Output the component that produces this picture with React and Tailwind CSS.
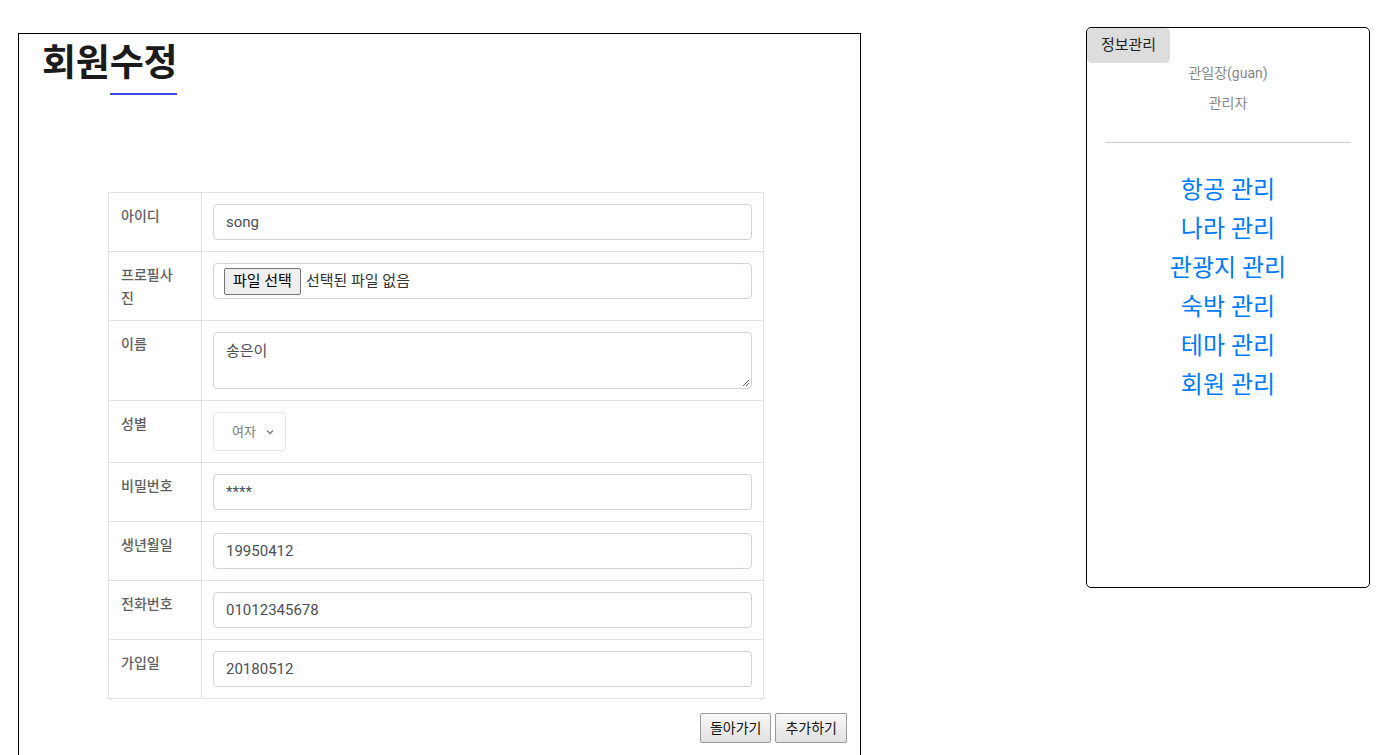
import React from "react";

const font = { fontFamily: 'Roboto, "Noto Sans CJK KR", sans-serif' };

function Row({ label, children, h }) {
  return (
    <tr className="border-b border-[#dee2e6]">
      <th className="w-[93px] border-r border-[#dee2e6] pl-3 pr-0 pt-[12px] pb-[10px] align-top text-left text-[14px] leading-[23px] font-medium text-[#5f5f5f]">
        <div className="w-[60px] break-all">{label}</div>
      </th>
      <td className="px-[11px] py-[11px] align-top" style={h ? { height: h } : undefined}>
        {children}
      </td>
    </tr>
  );
}

function Input({ value }) {
  return (
    <div className="h-[36px] w-full rounded-[4px] border border-[#ced4da] px-3 flex items-center text-[15px] text-[#495057]">
      {value}
    </div>
  );
}

function Btn({ children }) {
  return (
    <button className="h-[30px] px-[9px] border border-[#9a9a9a] rounded-[2px] bg-gradient-to-b from-[#f8f8f8] to-[#e1e1e1] text-[14px] text-[#111] leading-none">
      {children}
    </button>
  );
}

export default function App() {
  return (
    <div className="flex items-start bg-white min-h-[755px] overflow-hidden" style={font}>
      <div className="ml-[18px] mt-[33px] w-[843px] h-[760px] border border-black shrink-0">
        <div className="pl-[23px] pt-[2px]">
          <h1 className="text-[37px] font-bold leading-[48px] text-[#1b1b1b] tracking-[-0.2px]" style={{ fontFamily: '"Noto Sans CJK KR", sans-serif' }}>
            회원수정
          </h1>
          <div className="ml-[68px] mt-[9px] w-[67px] h-[2px] bg-[#3b4ce0]" />
        </div>
        <div className="ml-[89px] mt-[97px] w-[656px]">
          <table className="w-full border-collapse border border-[#dee2e6]">
            <tbody>
              <Row label="아이디">
                <Input value="song" />
              </Row>
              <Row label="프로필사진">
                <div className="h-[36px] w-full rounded-[4px] border border-[#ced4da] pl-[10px] flex items-center text-[15px] text-[#333]">
                  <span className="h-[27px] px-[8px] border border-[#767676] rounded-[2px] bg-[#efefef] flex items-center text-[15px] text-black">파일 선택</span>
                  <span className="ml-[5px]">선택된 파일 없음</span>
                </div>
              </Row>
              <Row label="이름">
                <div className="relative h-[57px] w-full rounded-[4px] border border-[#ced4da] px-3 pt-[7px] text-[15px] text-[#495057]">
                  송은이
                  <svg className="absolute right-[1px] bottom-[1px]" width="9" height="9" viewBox="0 0 9 9">
                    <path d="M8 2 L2 8 M8 5 L5 8" stroke="#666" strokeWidth="1" />
                  </svg>
                </div>
              </Row>
              <Row label="성별">
                <div className="h-[39px] w-[73px] rounded-[4px] border border-[#e4e4e4] flex items-center pl-[18px] text-[13px] text-[#777]">
                  여자
                  <svg className="ml-[10px]" width="8" height="6" viewBox="0 0 8 6">
                    <path d="M1 1.5 L4 4.5 L7 1.5" stroke="#888" strokeWidth="1.6" fill="none" />
                  </svg>
                </div>
              </Row>
              <Row label="비밀번호">
                <Input value="****" />
              </Row>
              <Row label="생년월일">
                <Input value="19950412" />
              </Row>
              <Row label="전화번호">
                <Input value="01012345678" />
              </Row>
              <Row label="가입일">
                <Input value="20180512" />
              </Row>
            </tbody>
          </table>
        </div>
        <div className="flex justify-end gap-[4px] mr-[13px] mt-[14px]">
          <Btn>돌아가기</Btn>
          <Btn>추가하기</Btn>
        </div>
      </div>
      <div className="ml-[225px] mt-[27px] w-[284px] h-[561px] border border-black rounded-[5px] shrink-0">
        <div className="w-[83px] h-[35px] bg-[#dddddd] rounded-[5px] flex items-center justify-center text-[15px] text-[#222]">
          정보관리
        </div>
        <div className="-mt-[5px] text-center text-[14px] leading-[30px] text-[#888]">
          <div>관일장(guan)</div>
          <div>관리자</div>
        </div>
        <div className="mx-[18px] mt-[24px] h-px bg-[#cccccc]" />
        <div className="mt-[28px] flex flex-col items-center text-[24px] leading-[39px] text-[#007bff]">
          <span>항공 관리</span>
          <span>나라 관리</span>
          <span>관광지 관리</span>
          <span>숙박 관리</span>
          <span>테마 관리</span>
          <span>회원 관리</span>
        </div>
      </div>
    </div>
  );
}
